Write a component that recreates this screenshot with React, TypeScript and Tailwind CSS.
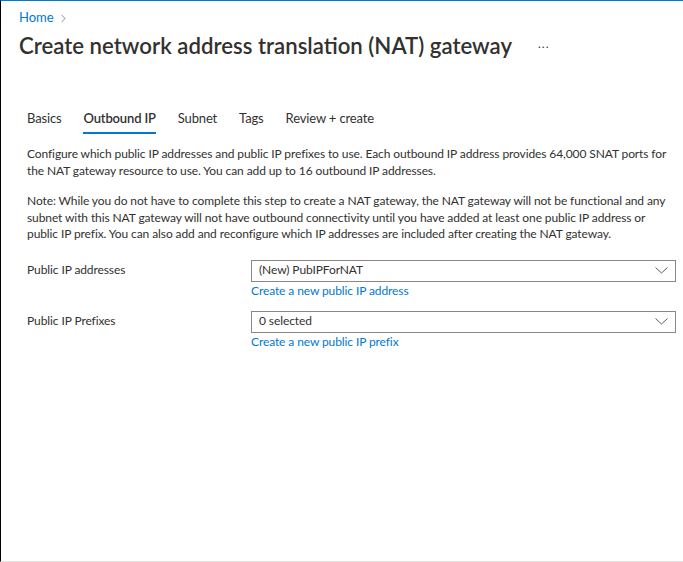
import { ChevronRight } from "lucide-react";

const tabs = ["Basics", "Outbound IP", "Subnet", "Tags", "Review + create"];

function Dropdown({ value }: { value: string }) {
  return (
    <div className="flex h-[22px] w-[425px] items-center justify-between border border-[#8a8886] bg-white pl-[7px] pr-[7px] text-[12px] tracking-[-0.1px] text-[#323130]">
      <span>{value}</span>
      <svg width="13" height="7" viewBox="0 0 13 7" fill="none">
        <path d="M0.5 0.5 L6.5 6 L12.5 0.5" stroke="#605e5c" strokeWidth="1" />
      </svg>
    </div>
  );
}

function Field({ label, value, link }: { label: string; value: string; link: string }) {
  return (
    <div className="flex">
      <div className="flex h-[22px] w-[224px] items-center">{label}</div>
      <div className="flex flex-col">
        <Dropdown value={value} />
        <a className="mt-[1px] leading-[16px] text-[#0078d4]">{link}</a>
      </div>
    </div>
  );
}

export default function App() {
  return (
    <div className="flex h-[562px] w-[683px] flex-col border-t border-b border-l border-t-[#0078d4] border-b-[#e1dfdd] border-l-black bg-white font-['Lato',sans-serif] text-[#323130]">
      <div className="pl-[18px] pt-[9px]">
        <div className="flex h-4 items-center gap-[3px] text-[13px] text-[#0078d4]">
          <span>Home</span>
          <ChevronRight className="h-[13px] w-[13px] text-[#605e5c]" strokeWidth={1.3} />
        </div>
        <div className="mt-[6px] flex items-center">
          <h1 className="text-[22.2px] font-semibold leading-[28px] text-[#323130]">
            Create network address translation (NAT) gateway
          </h1>
          <span className="ml-[26px] mt-[-4px] text-[12px] tracking-[1px] text-[#323130]">...</span>
        </div>
      </div>

      <div className="mt-[48px] flex gap-[22px] pl-[26px] text-[13px] tracking-[-0.15px]">
        {tabs.map((t) => (
          <div
            key={t}
            className={
              t === "Outbound IP"
                ? "border-b-2 border-[#0078d4] pb-[4px] font-semibold leading-[20px]"
                : "border-b-2 border-transparent pb-[4px] leading-[20px]"
            }
          >
            {t}
          </div>
        ))}
      </div>

      <div className="mt-[12px] pl-[26px] pr-[7px] text-[12px] leading-[16.5px] tracking-[-0.1px]">
        <p>
          Configure which public IP addresses and public IP prefixes to use. Each outbound IP address provides 64,000
          SNAT ports for the NAT gateway resource to use. You can add up to 16 outbound IP addresses.
        </p>
        <p className="mt-[14px]">
          Note: While you do not have to complete this step to create a NAT gateway, the NAT gateway will not be
          functional and any subnet with this NAT gateway will not have outbound connectivity until you have added at
          least one public IP address or public IP prefix. You can also add and reconfigure which IP addresses are
          included after creating the NAT gateway.
        </p>

        <div className="mt-[17px] flex flex-col gap-[12px]">
          <Field label="Public IP addresses" value="(New) PubIPForNAT" link="Create a new public IP address" />
          <Field label="Public IP Prefixes" value="0 selected" link="Create a new public IP prefix" />
        </div>
      </div>
    </div>
  );
}
